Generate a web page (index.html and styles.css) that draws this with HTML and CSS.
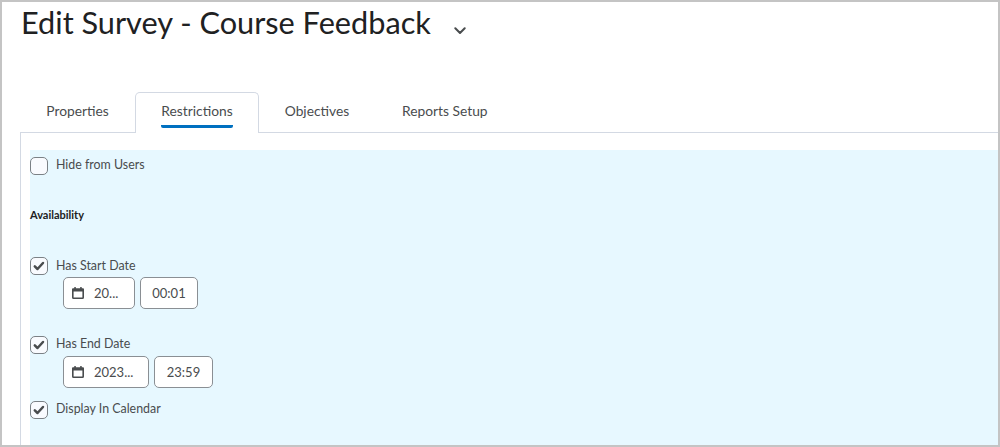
FILE: index.html
```html
<!DOCTYPE html>
<html lang="en">
<head>
<meta charset="utf-8">
<title>Edit Survey - Course Feedback</title>
<link rel="stylesheet" href="styles.css">
</head>
<body>
<div class="frame">
  <header class="title-row">
    <h1 class="title">Edit Survey - Course Feedback</h1>
    <svg class="chevron" viewBox="0 0 12 8" width="12" height="8"><path d="M1.300 1.300 6 6l4.700-4.700" fill="none" stroke="#494c4e" stroke-width="2" stroke-linecap="round" stroke-linejoin="round"/></svg>
  </header>
  <nav class="tabs">
    <div class="tab tab-first"><span class="tab-label">Properties</span></div>
    <div class="tab tab-active"><span class="tab-label">Restrictions</span></div>
    <div class="tab tab-third"><span class="tab-label">Objectives</span></div>
    <div class="tab tab-fourth"><span class="tab-label">Reports Setup</span></div>
  </nav>
  <main class="panel">
    <section class="highlight">
      <label class="check-row row-hide"><span class="box"></span><span>Hide from Users</span></label>
      <h2 class="section-title">Availability</h2>
      <label class="check-row row-start"><span class="box"><svg viewBox="0 0 18 18" width="18" height="18"><path d="M4.800 9.300 7.500 12 13 6" fill="none" stroke="#494c4e" stroke-width="2.500" stroke-linecap="round" stroke-linejoin="round"/></svg></span><span>Has Start Date</span></label>
      <div class="inputs">
        <div class="field date-short"><svg class="cal" viewBox="0 0 12 12" width="12" height="12"><path d="M0 4.500V2.300C0 1.600.5 1.200 1.200 1.200H2.300V0H3.800V1.200H8.200V0H9.700V1.200H10.800C11.500 1.200 12 1.600 12 2.300V4.500Z" fill="#494c4e"/><path d="M.8 4V10.500C.8 11 1 11.200 1.500 11.200H10.500C11 11.200 11.200 11 11.200 10.500V4" fill="none" stroke="#494c4e" stroke-width="1.600"/></svg><span>20...</span></div>
        <div class="field time-field">00:01</div>
      </div>
      <label class="check-row row-end"><span class="box"><svg viewBox="0 0 18 18" width="18" height="18"><path d="M4.800 9.300 7.500 12 13 6" fill="none" stroke="#494c4e" stroke-width="2.500" stroke-linecap="round" stroke-linejoin="round"/></svg></span><span>Has End Date</span></label>
      <div class="inputs">
        <div class="field date-long"><svg class="cal" viewBox="0 0 12 12" width="12" height="12"><path d="M0 4.500V2.300C0 1.600.5 1.200 1.200 1.200H2.300V0H3.800V1.200H8.200V0H9.700V1.200H10.800C11.500 1.200 12 1.600 12 2.300V4.500Z" fill="#494c4e"/><path d="M.8 4V10.500C.8 11 1 11.200 1.500 11.200H10.500C11 11.200 11.200 11 11.200 10.500V4" fill="none" stroke="#494c4e" stroke-width="1.600"/></svg><span>2023...</span></div>
        <div class="field time-field-wide">23:59</div>
      </div>
      <label class="check-row row-calendar"><span class="box"><svg viewBox="0 0 18 18" width="18" height="18"><path d="M4.800 9.300 7.500 12 13 6" fill="none" stroke="#494c4e" stroke-width="2.500" stroke-linecap="round" stroke-linejoin="round"/></svg></span><span>Display In Calendar</span></label>
    </section>
  </main>
</div>
</body>
</html>
```

FILE: styles.css
```css
* { box-sizing: border-box; }
html, body { margin: 0; padding: 0; background: #fff; }
body { font-family: Lato, "Noto Sans", sans-serif; color: #202122; }
.frame {
  width: 1000px;
  height: 447px;
  border: 2px solid #c4c4c4;
  overflow: hidden;
  display: flex;
  flex-direction: column;
  background: #fff;
}
.title-row { display: flex; align-items: flex-start; height: 90px; padding-left: 19px; }
.title { margin: 0; padding-top: 2px; font-size: 30.700px; line-height: 38px; font-weight: 400; color: #202122; }
.chevron { margin: 25px 0 0 23px; }
.tabs { display: flex; height: 41px; margin-left: 18px; flex: none; border-bottom: 1px solid #d3d9e3; }
.tab {
  height: 41px;
  font-size: 13.800px;
  line-height: 20px;
  padding-top: 9px;
  color: #494c4e;
  text-align: center;
  position: relative;
}
.tab-first { width: 115px; }
.tab-active {
  width: 124px;
  border: 1px solid #d3d9e3;
  border-bottom: 0;
  border-radius: 5px 5px 0 0;
  background: #fff;
  padding-top: 8px;
  z-index: 1;
}
.tab-active .tab-label { display: inline-block; height: 27px; border-bottom: 3px solid #0070c0; border-radius: 0 0 2px 2px; }
.tab-third { width: 116px; }
.tab-fourth { width: 168px; text-align: left; padding-left: 27px; }
.panel { flex: 1; margin-left: 18px; border-left: 1px solid #d3d9e3; padding: 17px 0 0 9px; min-height: 0; }
.highlight { height: 100%; background: #e7f8ff; padding-top: 7px; }
.check-row { display: flex; gap: 8px; font-size: 12.400px; line-height: 16px; color: #494c4e; }
.row-start { line-height: 18px; }
.box {
  width: 18px;
  height: 18px;
  flex: none;
  border: 1px solid #7b8186;
  border-radius: 5px;
  background: #f9fbff;
  display: flex;
  align-items: center;
  justify-content: center;
}
.box svg { display: block; flex: none; }
.section-title { margin: 32px 0 34px; font-size: 11px; line-height: 16px; font-weight: 700; color: #202122; }
.inputs { display: flex; gap: 5px; margin: 2px 0 0 33px; }
.field {
  height: 32px;
  border: 1px solid #8a8f94;
  border-radius: 5px;
  background: #fff;
  display: flex;
  align-items: center;
  font-size: 13px;
  color: #494c4e;
  justify-content: center;
}
.date-short { width: 72px; justify-content: flex-start; padding-left: 8px; gap: 10px; }
.date-long { width: 86px; justify-content: flex-start; padding-left: 8px; gap: 10px; }
.time-field { width: 58px; }
.time-field-wide { width: 59px; }
.row-end { margin-top: 27px; }
.row-calendar { margin-top: 13px; }
```
